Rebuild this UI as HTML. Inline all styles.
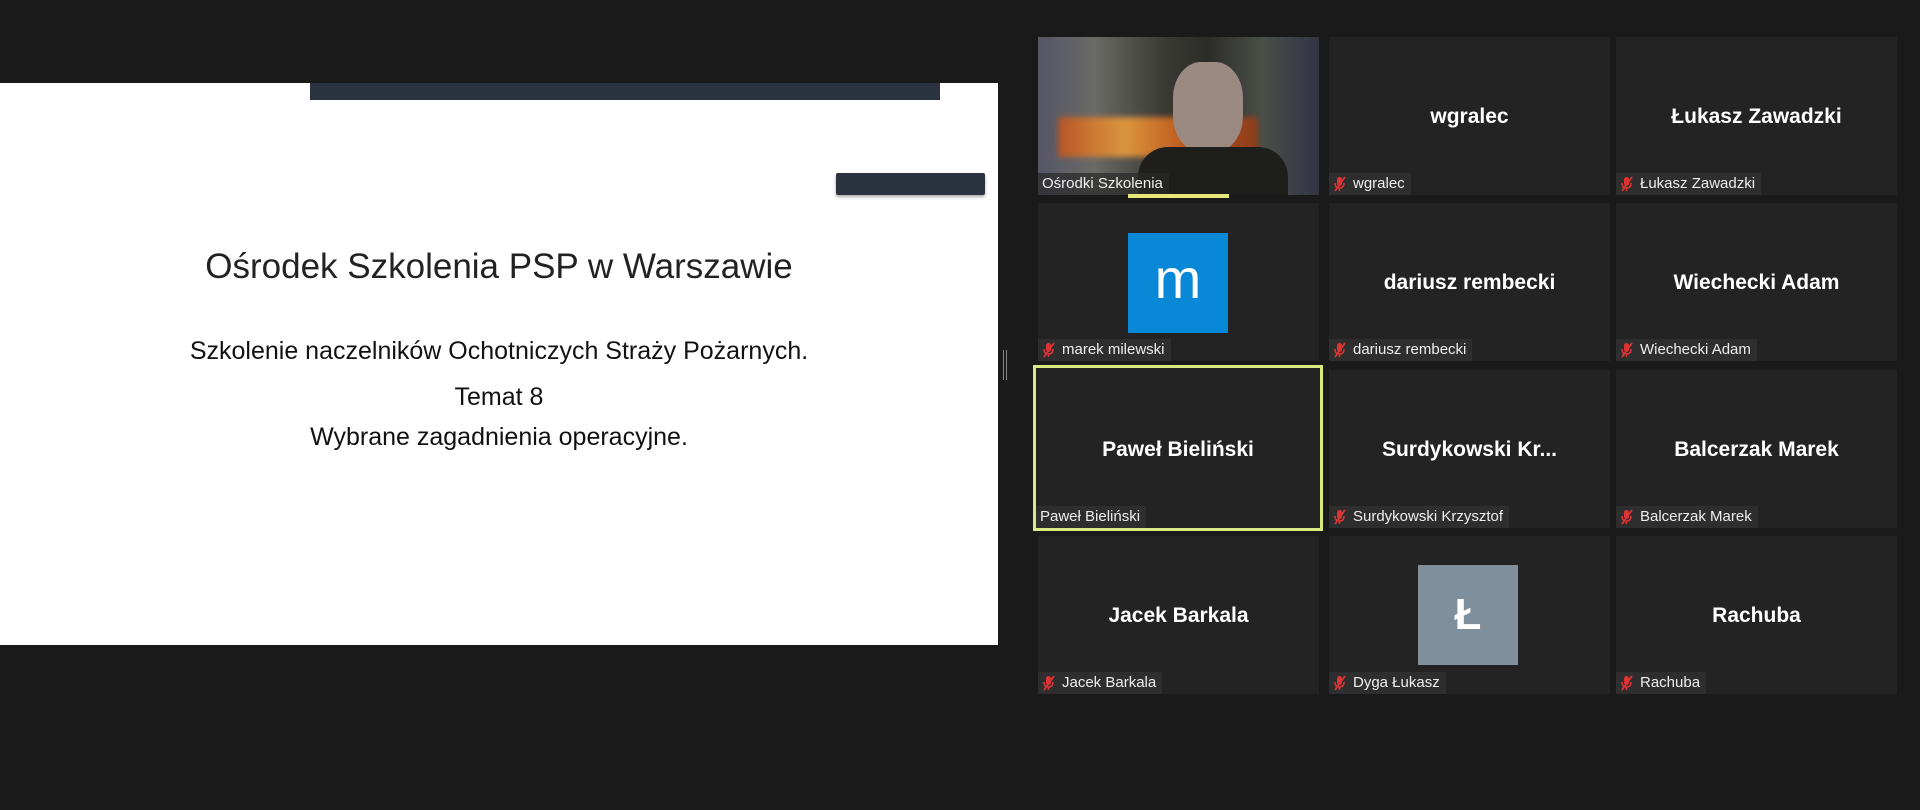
<!DOCTYPE html>
<html><head><meta charset="utf-8"><style>
body{margin:0;width:1920px;height:810px;background:#1a1a1a;position:relative;overflow:hidden;font-family:"Liberation Sans",sans-serif}
.slide{position:absolute;left:0;top:83px;width:998px;height:562px;background:#fff}
.t{position:absolute;left:0;width:998px;text-align:center;color:#111}
.tile{position:absolute;width:281px;height:158px;background:#232323}
.nm{position:absolute;left:0;right:0;top:68px;text-align:center;color:#fff;font-weight:bold;font-size:21px}
.lb{position:absolute;left:0;bottom:0;height:22px;line-height:22px;background:#2e2e2e;color:#eee;font-size:15px;padding:0 6px 0 4px;display:flex;align-items:center}
.lb svg{margin-right:6px}
</style></head><body>
<div class="slide">
<div style="position:absolute;left:310px;top:0;width:630px;height:17px;background:#2b3340"></div>
<div style="position:absolute;left:836px;top:90px;width:149px;height:22px;background:#2b3340;border-radius:2px;box-shadow:0 2px 3px #aaa"></div>
<div class="t" style="top:164px;font-size:35px;font-weight:300;color:#222">Ośrodek Szkolenia PSP w Warszawie</div>
<div class="t" style="top:254px;font-size:25px">Szkolenie naczelników Ochotniczych Straży Pożarnych.</div>
<div class="t" style="top:300px;font-size:25px">Temat 8</div>
<div class="t" style="top:340px;font-size:25px">Wybrane zagadnienia operacyjne.</div>
</div>
<div style="position:absolute;left:1003px;top:350px;height:30px;border-left:1px solid #888;border-right:1px solid #888;width:2px"></div>
<svg width="0" height="0" style="position:absolute"><defs><g id="m"><rect x="4" y="1" width="5" height="9" rx="2.5" fill="#d33"/><path d="M2 7q0 5 4.5 5t4.5-5M6.5 12v3" stroke="#d33" stroke-width="1.5" fill="none"/><path d="M12 1L2 15" stroke="#d33" stroke-width="1.8"/></g></defs></svg>

<div class="tile" style="left:1038px;top:37px;background:linear-gradient(90deg,#556 0%,#6a6a66 20%,#3a3a34 45%,#2b2b28 60%,#4a4f48 80%,#334 100%)">
<div style="position:absolute;left:20px;top:80px;width:200px;height:40px;background:linear-gradient(90deg,#c5541c,#f2a03a,#d35a1a,#9a3b14);opacity:.85;filter:blur(3px)"></div>
<div style="position:absolute;left:135px;top:25px;width:70px;height:90px;border-radius:40%;background:#9a8a82"></div>
<div style="position:absolute;left:100px;top:110px;width:150px;height:48px;background:#1e1e1c;border-radius:30px 30px 0 0"></div>
<div class="lb" style="background:rgba(40,40,40,.7)">Ośrodki Szkolenia</div>
<div style="position:absolute;left:90px;top:157px;width:101px;height:4px;background:#e8e87a"></div>
</div>
<div class="tile" style="left:1329px;top:37px"><div class="nm">wgralec</div><div class="lb"><svg width="14" height="16"><use href="#m"/></svg>wgralec</div></div>
<div class="tile" style="left:1616px;top:37px"><div class="nm">Łukasz Zawadzki</div><div class="lb"><svg width="14" height="16"><use href="#m"/></svg>Łukasz Zawadzki</div></div>

<div class="tile" style="left:1038px;top:203px"><div style="position:absolute;left:90px;top:30px;width:100px;height:100px;background:#0a88d8;color:#fff;font-size:56px;text-align:center;line-height:92px">m</div><div class="lb"><svg width="14" height="16"><use href="#m"/></svg>marek milewski</div></div>
<div class="tile" style="left:1329px;top:203px"><div class="nm">dariusz rembecki</div><div class="lb"><svg width="14" height="16"><use href="#m"/></svg>dariusz rembecki</div></div>
<div class="tile" style="left:1616px;top:203px"><div class="nm">Wiechecki Adam</div><div class="lb"><svg width="14" height="16"><use href="#m"/></svg>Wiechecki Adam</div></div>

<div class="tile" style="left:1033px;top:365px;width:284px;height:160px;border:3px solid #d8ea80"><div class="nm" style="top:70px">Paweł Bieliński</div><div class="lb">Paweł Bieliński</div></div>
<div class="tile" style="left:1329px;top:370px"><div class="nm">Surdykowski Kr...</div><div class="lb"><svg width="14" height="16"><use href="#m"/></svg>Surdykowski Krzysztof</div></div>
<div class="tile" style="left:1616px;top:370px"><div class="nm">Balcerzak Marek</div><div class="lb"><svg width="14" height="16"><use href="#m"/></svg>Balcerzak Marek</div></div>

<div class="tile" style="left:1038px;top:536px"><div class="nm">Jacek Barkala</div><div class="lb"><svg width="14" height="16"><use href="#m"/></svg>Jacek Barkala</div></div>
<div class="tile" style="left:1329px;top:536px"><div style="position:absolute;left:89px;top:29px;width:100px;height:100px;background:#7f909c;color:#fff;font-size:44px;font-weight:bold;text-align:center;line-height:100px">Ł</div><div class="lb"><svg width="14" height="16"><use href="#m"/></svg>Dyga Łukasz</div></div>
<div class="tile" style="left:1616px;top:536px"><div class="nm">Rachuba</div><div class="lb"><svg width="14" height="16"><use href="#m"/></svg>Rachuba</div></div>
</body></html>
